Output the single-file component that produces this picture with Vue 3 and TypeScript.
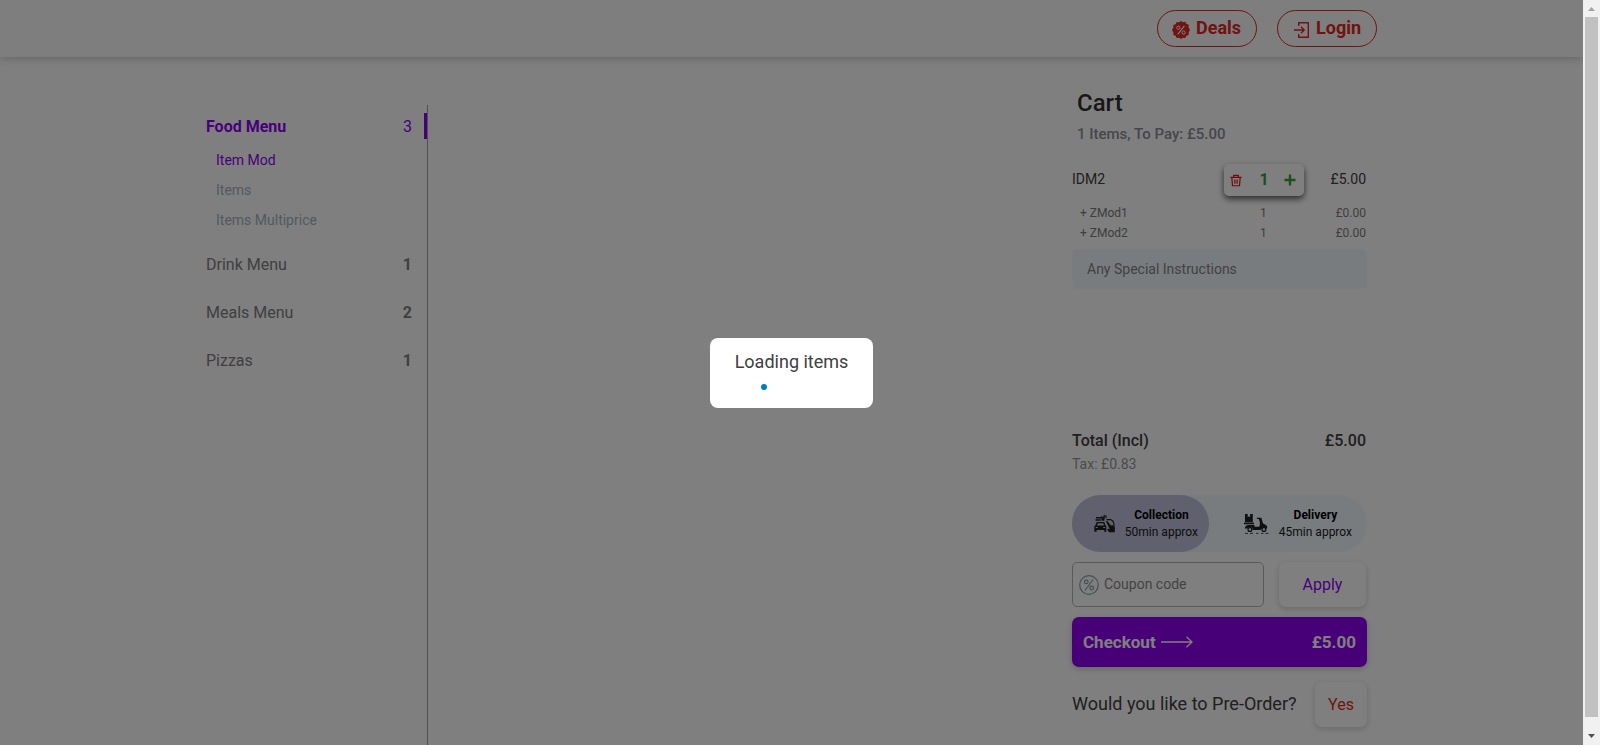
<script setup lang="ts">
interface MenuEntry {
  name: string
  count: number
}

const subItems: string[] = ['Item Mod', 'Items', 'Items Multiprice']
const menus: MenuEntry[] = [
  { name: 'Drink Menu', count: 1 },
  { name: 'Meals Menu', count: 2 },
  { name: 'Pizzas', count: 1 },
]
const modifiers: string[] = ['ZMod1', 'ZMod2']
</script>

<template>
  <div class="screen">
    <div class="page">
      <header class="header">
        <button class="pill">
          <svg class="pill-icon" width="18" height="18" viewBox="0 0 18 18">
            <path d="M9 0l1.900 1.200 2.400-.4 1.100 2 2.300.9-.1 2.500L18 9l-1.400 2.400.1 2.500-2.300.9-1.100 2.200-2.400-.3L9 18l-1.900-1.300-2.400.3-1.100-2.200-2.300-.9.1-2.500L0 9l1.400-2.400-.1-2.500 2.300-.9L4.700 1l2.400.3z" fill="#df2822" />
            <path d="M12.400 4.800L5.700 13.300" stroke="#fff" stroke-width="1.100" />
            <circle cx="6.400" cy="6.700" r="1.600" fill="none" stroke="#fff" />
            <circle cx="11.600" cy="11.600" r="1.600" fill="none" stroke="#fff" />
          </svg>
          <span>Deals</span>
        </button>
        <button class="pill">
          <svg class="pill-icon login" width="16" height="18" viewBox="0 0 16 18" fill="none" stroke="#df2822" stroke-width="1.400">
            <path d="M4.700 5V1.700h9.600v14.600H4.700V13M0 9h10M7 5.800L10.200 9 7 12.200" />
          </svg>
          <span>Login</span>
        </button>
      </header>

      <main class="content">
        <nav class="menu">
          <div class="menu-row active">
            <span>Food Menu</span><span class="count">3</span>
          </div>
          <div v-for="(s, i) in subItems" :key="s" class="sub" :class="{ current: i === 0 }">{{ s }}</div>
          <div class="menu-rest">
            <div v-for="m in menus" :key="m.name" class="menu-row">
              <span>{{ m.name }}</span><span class="count">{{ m.count }}</span>
            </div>
          </div>
        </nav>

        <aside class="cart">
          <h2>Cart</h2>
          <p class="summary">1 Items, To Pay: £5.00</p>

          <div class="item">
            <span class="item-name">IDM2</span>
            <div class="stepper">
              <svg width="12" height="13" viewBox="0 0 13 13" fill="none" stroke="#d81414" stroke-width="1.300">
                <path d="M.5 3.200h12M4 3V1h5v2M2 3.500l.7 8.700h7.600L11 3.500M5.300 5.500v4.500M7.700 5.500v4.500" />
              </svg>
              <b>1</b>
              <svg width="12" height="12" viewBox="0 0 12 12"><path d="M6 .5v11M.5 6h11" stroke="#379e3c" stroke-width="2.400" /></svg>
            </div>
            <span class="price">£5.00</span>
          </div>
          <div v-for="m in modifiers" :key="m" class="modifier">
            <span class="mod-name">+ {{ m }}</span><span class="mod-qty">1</span><span class="price">£0.00</span>
          </div>
          <div class="instructions">Any Special Instructions</div>

          <div class="total"><span>Total (Incl)</span><span>£5.00</span></div>
          <div class="tax">Tax: £0.83</div>

          <div class="method">
            <div class="option selected">
              <svg width="21" height="19" viewBox="0 0 21 19" fill="#1e1e1e">
                <path d="M2 3h5v1.500H2zM1.500 5.300h5.200v1.400H1.500zM7 2.500l1.200-.6.600 2L10 .8l1 .5-.7 5.400H7.500z" />
                <path d="M2.700 8h7.600l1.200 3.500.8.700v5.500h-2V16H2.600v1.700H.3v-5.500l1-.7zM3.700 9.200L3 11.600h7l-.7-2.400zM1.700 13v1h2v-1zm7.500 0v1h2v-1z" fill-rule="evenodd" />
                <path d="M12 1.300v3M12.500 5.600h4.200l2.300 1.600.9 2.300v6" fill="none" stroke="#1e1e1e" stroke-width="1.100" />
                <path d="M12 7.200l1.200-.4 3.700 4.600 2.300-.2 1.600 2.300v4.800h-5.600l-1.900-2.500.8-1 1.600.3z" />
              </svg>
              <div class="option-text"><b>Collection</b><span>50min approx</span></div>
            </div>
            <div class="option">
              <svg width="25" height="20" viewBox="0 0 25 20" fill="#1e1e1e">
                <path d="M1 0h2.700v3.200l1.200-.9 1.200.9V0h2.700v8H1z" />
                <path d="M0 8.600h10v1.600H0zM.8 14.500c.2-2 1.600-3.400 3.400-3.400h6.300v1.700h4.700c.7-1.600.9-3.200.5-5.100l-.8-2.600h-2V3.700h4.400l1.700 5.700 2.900 1.700 1.300 1.400-.2 1.900h-1.200a2.500 2.500 0 0 0-4.400.7l-1.100 1H8.800a3 3 0 0 0-5.600-1.600z" />
                <circle cx="5.900" cy="15.400" r="1.900" fill="none" stroke="#1e1e1e" stroke-width="1.300" />
                <circle cx="19.900" cy="15.400" r="1.900" fill="none" stroke="#1e1e1e" stroke-width="1.300" />
                <path d="M1 19.400h3m2 0h3m3 0h2.500m2.500 0h2.500m2 0h3" stroke="#1e1e1e" stroke-width=".8" />
              </svg>
              <div class="option-text"><b>Delivery</b><span>45min approx</span></div>
            </div>
          </div>

          <div class="coupon">
            <div class="field">
              <svg width="20" height="20" viewBox="0 0 20 20" fill="none" stroke="#89a0aa" stroke-width="1.200">
                <circle cx="10" cy="10" r="9.300" />
                <path d="M14 4.500L6 15.500" /><circle cx="7.300" cy="6.900" r="1.800" /><circle cx="12.700" cy="13" r="1.800" />
              </svg>
              <span>Coupon code</span>
            </div>
            <button class="apply">Apply</button>
          </div>

          <div class="checkout">
            <span>Checkout</span>
            <svg width="32" height="12" viewBox="0 0 32 12" fill="none" stroke="#fff" stroke-width="1.300"><path d="M0 6h31M25.500.7L31 6l-5.500 5.300" /></svg>
            <span class="checkout-price">£5.00</span>
          </div>
          <div class="preorder">
            <span>Would you like to Pre-Order?</span>
            <button class="yes">Yes</button>
          </div>
        </aside>
      </main>

      <div class="overlay">
        <div class="loader">
          <span>Loading items</span>
          <i class="dot"></i>
        </div>
      </div>
    </div>

    <div class="scrollbar">
      <svg width="17" height="17" viewBox="0 0 17 17"><path d="M5 11l3.500-4 3.500 4z" fill="#a3a3a3" /></svg>
      <div class="thumb"></div>
      <svg width="17" height="17" viewBox="0 0 17 17"><path d="M5 6l3.500 4L12 6z" fill="#505050" /></svg>
    </div>
  </div>
</template>

<style>
body { margin: 0; overflow: hidden; }
</style>

<style scoped>
* { box-sizing: border-box; }
.screen { display: flex; width: 1600px; height: 745px; overflow: hidden; font-family: Roboto, "Liberation Sans", sans-serif; font-size: 16px; }
.page { position: relative; width: 1583px; height: 745px; background: #fff; overflow: hidden; display: flex; flex-direction: column; }
button { font-family: inherit; margin: 0; padding: 0; }
h2, p { margin: 0; }

.header { height: 57px; flex: none; display: flex; gap: 20px; padding: 10px 0 0 1157px; background: #fcfcff; box-shadow: 0 2px 8px rgba(60, 80, 70, .28); }
.pill { width: 100px; height: 37px; display: flex; align-items: center; padding-left: 14px; border: 1px solid #df2822; border-radius: 19px; background: none; color: #df2822; font-size: 18px; font-weight: 700; line-height: 35px; }
.pill-icon { margin: 2px 6px 0 0; }
.pill-icon.login { margin-right: 6px; margin-left: 2px; }
.pill span { margin-top: -2px; }

.content { flex: 1; display: flex; justify-content: space-between; padding: 0 216px 0 206px; }
.menu { width: 222px; margin-top: 48px; padding-top: 2px; border-right: 1px solid #a0a0a0; color: #808080; }
.menu-row { height: 48px; display: flex; align-items: center; justify-content: space-between; padding-right: 15px; }
.count { font-weight: 700; }
.menu-row.active { height: 26px; margin: 6px 0; border-right: 3px solid #9000f5; padding-right: 12px; color: #9000f5; font-weight: 700; }
.active .count { font-weight: 400; }
.sub { height: 30px; line-height: 30px; padding-left: 10px; font-size: 14px; color: #a4b4ba; }
.sub.current { color: #9000f5; }
.menu-rest { margin-top: 5px; }

.cart { width: 295px; }
h2 { padding-left: 5px; margin-top: 29px; height: 34px; line-height: 34px; font-size: 24px; font-weight: 500; color: #303030; }
.summary { padding-left: 5px; height: 28px; line-height: 28px; font-size: 15px; font-weight: 500; color: #8d8d96; }
.item { margin-top: 16px; height: 32px; display: flex; align-items: center; font-size: 14px; color: #404040; }
.item-name { width: 152px; }
.item > span { margin-top: -2px; }
.stepper { width: 80px; height: 32px; padding: 0 8px 0 6px; display: flex; align-items: center; justify-content: space-between; border-radius: 5px; background: #fff; box-shadow: 0 3px 6px rgba(0, 0, 0, .65); color: #379e3c; font-size: 16px; }
.stepper b { margin: -2px 0 0 2px; }
.price { margin-left: auto; padding-right: 1px; }
.modifier { height: 20px; display: flex; align-items: center; padding-left: 8px; font-size: 12px; color: #7c7c7c; }
.item + .modifier { margin-top: 7px; }
.mod-name { width: 180px; }
.instructions { margin-top: 6px; height: 40px; padding-left: 15px; line-height: 40px; border-radius: 5px; background: #f0f8ff; color: #858585; font-size: 14px; }
.total { margin-top: 138px; height: 26px; display: flex; justify-content: space-between; align-items: center; padding-right: 1px; font-weight: 500; color: #404040; }
.tax { height: 22px; line-height: 22px; font-size: 14px; color: #96969c; }

.method { margin-top: 20px; height: 57px; display: flex; border-radius: 29px; background: #f0f8ff; }
.option { display: flex; align-items: center; flex: 1; padding: 0 15px 0 35px; justify-content: space-between; color: #181818; font-size: 12px; }
.option.selected { flex: none; width: 137px; padding: 0 11px 0 22px; border-radius: 29px; background: #c0c0dc; }
.option-text { display: flex; flex-direction: column; align-items: center; line-height: 17px; }
.option-text b { color: #000; font-weight: 700; }

.coupon { margin-top: 10px; height: 45px; display: flex; justify-content: space-between; }
.field { width: 192px; display: flex; align-items: center; gap: 5px; padding-left: 6px; border: 1px solid #b5b5b5; border-radius: 5px; font-size: 14px; color: #888; }
.field span { margin-top: -1px; }
.apply, .yes { border: 0; border-radius: 7px; background: #fff; box-shadow: 0 2px 6px rgba(0, 0, 0, .18); font-size: 16px; }
.apply { width: 87px; margin-right: 1px; color: #9000f5; }
.checkout { margin-top: 10px; height: 50px; display: flex; align-items: center; padding: 0 11px; border-radius: 7px; background: #9000f2; color: #fff; font-size: 17px; font-weight: 700; box-shadow: 0 2px 6px rgba(0, 0, 0, .22); }
.checkout svg { margin-left: 5px; }
.checkout-price { margin-left: auto; }
.preorder { margin-top: 15px; height: 45px; display: flex; align-items: center; justify-content: space-between; font-size: 18px; color: #404040; }
.preorder span { margin-top: -2px; }
.yes { width: 52px; height: 45px; color: #df2822; }

.overlay { position: absolute; inset: 0; display: flex; align-items: center; justify-content: center; background: rgba(0, 0, 0, .5); }
.loader { width: 163px; height: 70px; padding-top: 12px; border-radius: 8px; background: #fff; color: #404040; font-size: 18px; line-height: 24px; text-align: center; }
.dot { display: block; width: 6px; height: 6px; margin: 10px 0 0 51px; border-radius: 50%; background: #007dbc; }

.scrollbar { width: 17px; display: flex; flex-direction: column; background: #f1f1f1; }
.scrollbar svg { flex: none; }
.thumb { height: 700px; margin: 0 2px 11px; background: #c1c1c1; flex: none; }
</style>
